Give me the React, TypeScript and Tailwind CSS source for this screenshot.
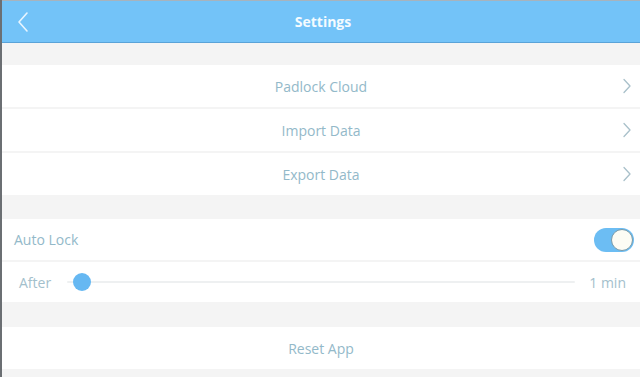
import React from "react";

const Chevron = () => (
  <svg width="10" height="16" viewBox="0 0 10 16" fill="none" className="absolute right-[8px]">
    <path d="M2 1.5 L8 8 L2 14.5" stroke="#a9c0ca" strokeWidth="1.3" strokeLinecap="round" strokeLinejoin="round" />
  </svg>
);

const NavRow = ({ label }: { label: string }) => (
  <div className="relative flex h-[42px] items-center justify-center bg-white">
    <span className="text-[14px] text-[#93b9c9]">{label}</span>
    <Chevron />
  </div>
);

export default function App() {
  return (
    <div
      className="flex h-[377px] w-[640px] flex-col overflow-hidden border-l-2 border-[#6b6f73] bg-[#f4f4f4]"
      style={{ fontFamily: '"Open Sans", "Noto Sans", sans-serif' }}
    >
      <div className="flex h-[43px] shrink-0 items-center border-t border-b border-t-[#a7b3bd] border-b-[#5aa3d8] bg-[#73c3f8] px-[12px]">
        <svg width="14" height="22" viewBox="0 0 14 22" fill="none" className="ml-[2px]">
          <path d="M11 2 L3 11 L11 20" stroke="#e8f5ff" strokeWidth="1.6" strokeLinecap="round" strokeLinejoin="round" />
        </svg>
        <div className="flex-1 pr-[12px] text-center text-[14px] font-bold text-[#f4fbff]">Settings</div>
      </div>
      <div className="h-[22px] shrink-0" />
      <div className="flex flex-col gap-[2px]">
        <NavRow label="Padlock Cloud" />
        <NavRow label="Import Data" />
        <NavRow label="Export Data" />
      </div>
      <div className="h-[24px] shrink-0" />
      <div className="flex flex-col gap-[2px]">
        <div className="flex h-[41px] items-center justify-between bg-white pl-[12px] pr-[6px]">
          <span className="text-[14px] text-[#93b9c9]">Auto Lock</span>
          <div className="flex h-[24px] w-[40px] items-center justify-end rounded-full bg-[#6cbdf3] pr-[1px]">
            <div className="h-[22px] w-[22px] rounded-full border border-[#7a9aa8] bg-[#fdfcf4]" />
          </div>
        </div>
        <div className="flex h-[40px] items-center bg-white pl-[17px] pr-[14px]">
          <span className="w-[48px] text-[14px] text-[#a3c0cc]">After</span>
          <div className="relative flex h-[18px] flex-1 items-center">
            <div className="h-[2px] w-full rounded bg-[#eef0f1]" />
            <div className="absolute left-[6px] h-[18px] w-[18px] rounded-full bg-[#66b8f2]" />
          </div>
          <span className="ml-[14px] text-[14px] text-[#a3c0cc]">1 min</span>
        </div>
      </div>
      <div className="h-[25px] shrink-0" />
      <div className="flex h-[42px] items-center justify-center bg-white">
        <span className="text-[14px] text-[#93b9c9]">Reset App</span>
      </div>
    </div>
  );
}
